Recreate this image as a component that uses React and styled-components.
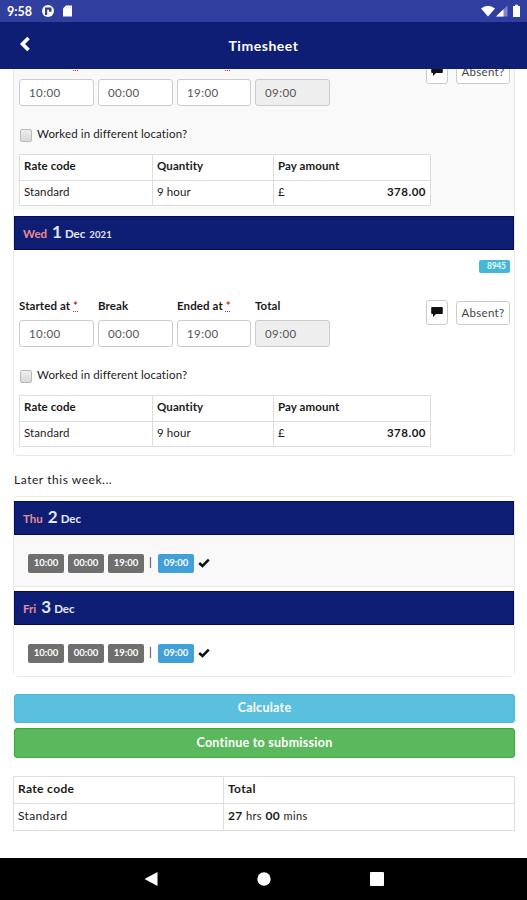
import React, { useState } from 'react';
import styled, { createGlobalStyle } from 'styled-components';

const GlobalStyle = createGlobalStyle`
  * {
    box-sizing: border-box;
  }

  body {
    margin: 0;
    background: #fff;
    color: #1a1a1a;
    font-family: Lato, "Liberation Sans", sans-serif;
    font-size: 12px;
    letter-spacing: 0.15px;
  }
`;

const Screen = styled.div`
  display: flex;
  flex-direction: column;
  width: 527px;
  height: 900px;
  overflow: hidden;
`;

const StatusBar = styled.div`
  display: flex;
  align-items: center;
  flex: none;
  height: 22px;
  padding: 0 5px 0 7px;
  background: #303f9f;
  color: #fff;

  .clock {
    width: 34px;
    font-size: 12.5px;
    font-weight: 700;
    letter-spacing: 0;
  }

  .system {
    margin-left: auto;
  }

  svg {
    display: block;
  }
`;

const AppBar = styled.header`
  display: grid;
  grid-template-columns: 60px 1fr 60px;
  align-items: center;
  flex: none;
  height: 47px;
  background: #0f1e75;
  color: #fff;

  svg {
    display: block;
    margin: -3px 0 0 18px;
  }

  h1 {
    margin: 0;
    text-align: center;
    font-size: 14px;
    font-weight: 700;
    letter-spacing: 0.55px;
  }
`;

const Viewport = styled.main`
  flex: 1;
  min-height: 0;
  overflow: hidden;
`;

// The list is scrolled, so the first day starts above the viewport
const Content = styled.div`
  padding: 0 12px 0 13px;
  margin-top: -60px;
`;

const Panel = styled.section`
  border: 1px solid #e8e8e8;
  border-top-width: ${(p) => (p.$cut ? 0 : '1px')};
  border-radius: ${(p) => (p.$cut ? '0 0 5px 5px' : '5px')};
  padding-top: ${(p) => (p.$cut ? 0 : '4px')};
`;

const DayHeader = styled.div`
  display: flex;
  align-items: baseline;
  height: 34px;
  padding-left: 8px;
  border: 1px solid #07085f;
  background: #0f1e75;
  color: #e4e8f8;
  font-size: 11.5px;
  font-weight: 700;
  line-height: 31px;
  letter-spacing: 0;

  .weekday {
    color: #e98a94;
  }

  .number {
    margin: 0 3px 0 5px;
    font-size: 17px;
    line-height: 29px;
  }

  .year {
    margin-left: 4px;
    font-size: 9.5px;
    letter-spacing: 0.1px;
  }
`;

const DayBody = styled.div`
  height: ${(p) => p.$height}px;
  padding: 10px 4px 0 5px;
  margin-bottom: ${(p) => (p.$gap ? '6px' : 0)};
  background: ${(p) => (p.$shaded ? '#f9f9f9' : '#fff')};
`;

const CodeBadge = styled.div`
  width: 31px;
  height: 13px;
  margin-left: auto;
  padding-left: 8px;
  border-radius: 2px;
  background: #45b8d8;
  color: #e4f8fc;
  font-size: 8.5px;
  font-weight: 700;
  line-height: 12px;
  letter-spacing: -0.3px;
`;

const EntryRow = styled.div`
  display: flex;
  align-items: flex-start;
  margin-top: 25px;
`;

const Field = styled.label`
  display: block;
  width: ${(p) => p.$width || 75}px;
  margin-right: 4px;
  font-size: 11.5px;
  font-weight: 700;
  letter-spacing: 0.1px;
  line-height: 16px;
  white-space: nowrap;

  abbr {
    color: #c9302c;
    text-decoration: underline dotted;
  }

  input {
    display: block;
    width: 100%;
    height: 27px;
    margin-top: 6px;
    padding: 0 9px 1px;
    border: 1px solid #ccc;
    border-radius: 3px;
    outline: none;
    background: #fff;
    color: #555;
    font-family: inherit;
    font-size: 11.5px;
    letter-spacing: 0.4px;
  }

  input:read-only {
    background: #eee;
  }
`;

const Actions = styled.div`
  display: flex;
  align-items: flex-start;
  gap: 8px;
  margin: 2px 0 0 auto;
`;

const OutlineButton = styled.button`
  display: flex;
  align-items: center;
  justify-content: center;
  width: ${(p) => p.$width}px;
  height: ${(p) => p.$height}px;
  margin-top: ${(p) => p.$drop || 0}px;
  padding: 0 0 2px;
  border: 1px solid #ccc;
  border-radius: 3px;
  background: #fff;
  color: #444;
  font-family: inherit;
  font-size: 11.5px;
  letter-spacing: 0.3px;
`;

const LocationCheck = styled.label`
  display: flex;
  align-items: center;
  height: 16px;
  margin-top: 19px;
  padding-left: 1px;
  font-size: 11.5px;
  letter-spacing: 0.12px;

  input {
    appearance: none;
    width: 12px;
    height: 13px;
    margin: 4px 5px 0 0;
    border: 1px solid #bbb;
    border-radius: 2px;
    background: linear-gradient(#eee, #d8d8d8);
  }
`;

const Table = styled.table`
  width: ${(p) => p.$width}px;
  margin-top: ${(p) => p.$top}px;
  border-collapse: collapse;
  table-layout: fixed;
  background: #fff;
  font-size: ${(p) => p.$size || 11.5}px;
  letter-spacing: ${(p) => p.$spacing || 0.1}px;

  th,
  td {
    height: ${(p) => p.$row}px;
    padding: 0 4px 3px;
    border: 1px solid #ddd;
    text-align: left;
  }

  small {
    font-size: 11px;
  }
`;

const Money = styled.div`
  display: flex;
  justify-content: space-between;

  b {
    letter-spacing: 0.5px;
  }
`;

const SectionLabel = styled.p`
  height: 18px;
  margin: 15px 0 7px 1px;
  font-size: 12px;
  line-height: 18px;
  letter-spacing: 0.55px;
`;

const Summary = styled.div`
  display: flex;
  align-items: center;
  height: ${(p) => p.$height}px;
  padding: 5px 0 0 14px;
  margin-bottom: ${(p) => (p.$gap ? '4px' : 0)};
  border-bottom: ${(p) => (p.$gap ? '1px solid #e8e8e8' : 'none')};
  background: ${(p) => (p.$shaded ? '#f9f9f9' : '#fff')};

  svg {
    margin: -1px 0 0 4px;
  }
`;

const TimeTag = styled.span`
  width: 36px;
  height: 19px;
  margin-right: ${(p) => (p.$total ? 0 : '4px')};
  border-radius: 2px;
  background: ${(p) => (p.$total ? '#419fda' : '#6f6f6f')};
  color: #fff;
  font-size: 9.5px;
  font-weight: 700;
  line-height: 18px;
  letter-spacing: 0;
  text-align: center;
`;

const Divider = styled.span`
  width: 10px;
  margin-top: -3px;
  padding-right: 5px;
  font-size: 11px;
  text-align: center;
`;

const BlockButton = styled.button`
  display: block;
  width: 501px;
  height: ${(p) => p.$height}px;
  margin: ${(p) => p.$top}px 0 0 1px;
  padding: 0 0 2px;
  border: 1px solid ${(p) => p.$edge};
  border-radius: 3px;
  background: ${(p) => p.$color};
  color: #fff;
  font-family: inherit;
  font-size: 12.5px;
  font-weight: 700;
  letter-spacing: 0.25px;
`;

const NavBar = styled.nav`
  display: flex;
  align-items: center;
  justify-content: space-between;
  flex: none;
  height: 42px;
  padding: 0 143px 0 144px;
  background: #000;
`;

const CommentIcon = () => (
  <svg width="12" height="12" viewBox="0 0 12 12" fill="#111">
    <path d="M1 1h10q.8 0 .8.8v5.400q0 .8-.8.8H5L2 11V8H1Q.2 8 .2 7.200V1.800Q.2 1 1 1z" />
  </svg>
);

const TickIcon = () => (
  <svg width="12" height="10" viewBox="0 0 12 10">
    <path d="M1.200 5 4.500 8 10.800 1.700" fill="none" stroke="#111" strokeWidth="2.500" />
  </svg>
);

const times = [
  { label: 'Started at', value: '10:00', required: true },
  { label: 'Break', value: '00:00' },
  { label: 'Ended at', value: '19:00', required: true, width: 74 },
  { label: 'Total', value: '09:00', readOnly: true },
];

const DayEntry = ({ shaded, height, gap }) => {
  const [elsewhere, setElsewhere] = useState(false);

  return (
    <DayBody $shaded={shaded} $height={height} $gap={gap}>
      <CodeBadge>8945</CodeBadge>
      <EntryRow>
        {times.map((t) => (
          <Field key={t.label} $width={t.width}>
            {t.label} {t.required && <abbr>*</abbr>}
            <input defaultValue={t.value} readOnly={t.readOnly} />
          </Field>
        ))}
        <Actions>
          <OutlineButton $width={22} $height={25} aria-label="Comment">
            <CommentIcon />
          </OutlineButton>
          <OutlineButton $width={54} $height={24} $drop={1}>Absent?</OutlineButton>
        </Actions>
      </EntryRow>
      <LocationCheck>
        <input type="checkbox" checked={elsewhere} onChange={(e) => setElsewhere(e.target.checked)} />
        Worked in different location?
      </LocationCheck>
      <Table $width={412} $top={13} $row={25.5}>
        <colgroup>
          <col width="133" />
          <col width="121" />
          <col />
        </colgroup>
        <tbody>
          <tr>
            <th>Rate code</th>
            <th>Quantity</th>
            <th>Pay amount</th>
          </tr>
          <tr>
            <td>Standard</td>
            <td>9 hour</td>
            <td>
              <Money>
                <span>£</span>
                <b>378.00</b>
              </Money>
            </td>
          </tr>
        </tbody>
      </Table>
    </DayBody>
  );
};

const DaySummary = ({ shaded, height, gap }) => (
  <Summary $shaded={shaded} $height={height} $gap={gap}>
    <TimeTag>10:00</TimeTag>
    <TimeTag>00:00</TimeTag>
    <TimeTag>19:00</TimeTag>
    <Divider>|</Divider>
    <TimeTag $total>09:00</TimeTag>
    <TickIcon />
  </Summary>
);

const DayTitle = ({ weekday, number, year }) => (
  <DayHeader>
    <span className="weekday">{weekday}</span>
    <span className="number">{number}</span>
    <span>Dec</span>
    {year && <span className="year">{year}</span>}
  </DayHeader>
);

const App = () => (
  <>
    <GlobalStyle />
    <Screen>
      <StatusBar>
        <span className="clock">9:58</span>
        <svg width="32" height="14" viewBox="0 0 32 14">
          <circle cx="7" cy="7" r="6" fill="#fff" />
          <path d="M4 3.500h6.500v4.200H8V5.700H6.200V11H4z" fill="#303f9f" />
          <path d="M25 1.500h6v11H22V4.500z" fill="#fff" />
          <path d="M25.500 3v1.500M27.500 3v1.500M29.300 3v1.500" stroke="#c7cce8" strokeWidth=".8" />
        </svg>
        <svg className="system" width="41" height="14" viewBox="0 0 41 14">
          <path d="M0 4.500Q7 -1 14 4.500L7 12.500z" fill="#fff" />
          <path d="M15 12.500 26.500 1.500v11z" fill="#7f89c5" />
          <path d="M15 12.500 22.500 5.300v7.200z" fill="#fff" />
          <path d="M32 2h2V.8h3V2h2v11h-7z" fill="#fff" />
        </svg>
      </StatusBar>
      <AppBar>
        <svg width="12" height="16" viewBox="0 0 12 16">
          <path d="M10.500 2 4.500 8l6 6" fill="none" stroke="#fff" strokeWidth="3.600" />
        </svg>
        <h1>Timesheet</h1>
      </AppBar>
      <Viewport>
        <Content>
          <Panel $cut>
            <DayEntry shaded height={201} gap />
            <DayTitle weekday="Wed" number="1" year="2021" />
            <DayEntry height={205} />
          </Panel>
          <SectionLabel>Later this week...</SectionLabel>
          <Panel>
            <DayTitle weekday="Thu" number="2" />
            <DaySummary shaded height={52} gap />
            <DayTitle weekday="Fri" number="3" />
            <DaySummary height={51} />
          </Panel>
          <BlockButton $color="#5bc0de" $edge="#46b8da" $height={29} $top={17}>Calculate</BlockButton>
          <BlockButton $color="#5cb85c" $edge="#35ad38" $height={30} $top={5}>Continue to submission</BlockButton>
          <Table $width={502} $top={18} $row={27} $size={12} $spacing={0.35}>
            <colgroup>
              <col width="210" />
              <col />
            </colgroup>
            <tbody>
              <tr>
                <th>Rate code</th>
                <th>Total</th>
              </tr>
              <tr>
                <td>Standard</td>
                <td>
                  <b>27</b> <small>hrs</small> <b>00</b> <small>mins</small>
                </td>
              </tr>
            </tbody>
          </Table>
        </Content>
      </Viewport>
      <NavBar>
        <svg width="14" height="16" viewBox="0 0 14 16">
          <path d="M13.500 1v14L.5 8z" fill="#fff" />
        </svg>
        <svg width="14" height="14" viewBox="0 0 14 14">
          <circle cx="7" cy="7" r="6.700" fill="#fff" />
        </svg>
        <svg width="14" height="14" viewBox="0 0 14 14">
          <rect width="14" height="14" rx="1" fill="#fff" />
        </svg>
      </NavBar>
    </Screen>
  </>
);

export default App;
